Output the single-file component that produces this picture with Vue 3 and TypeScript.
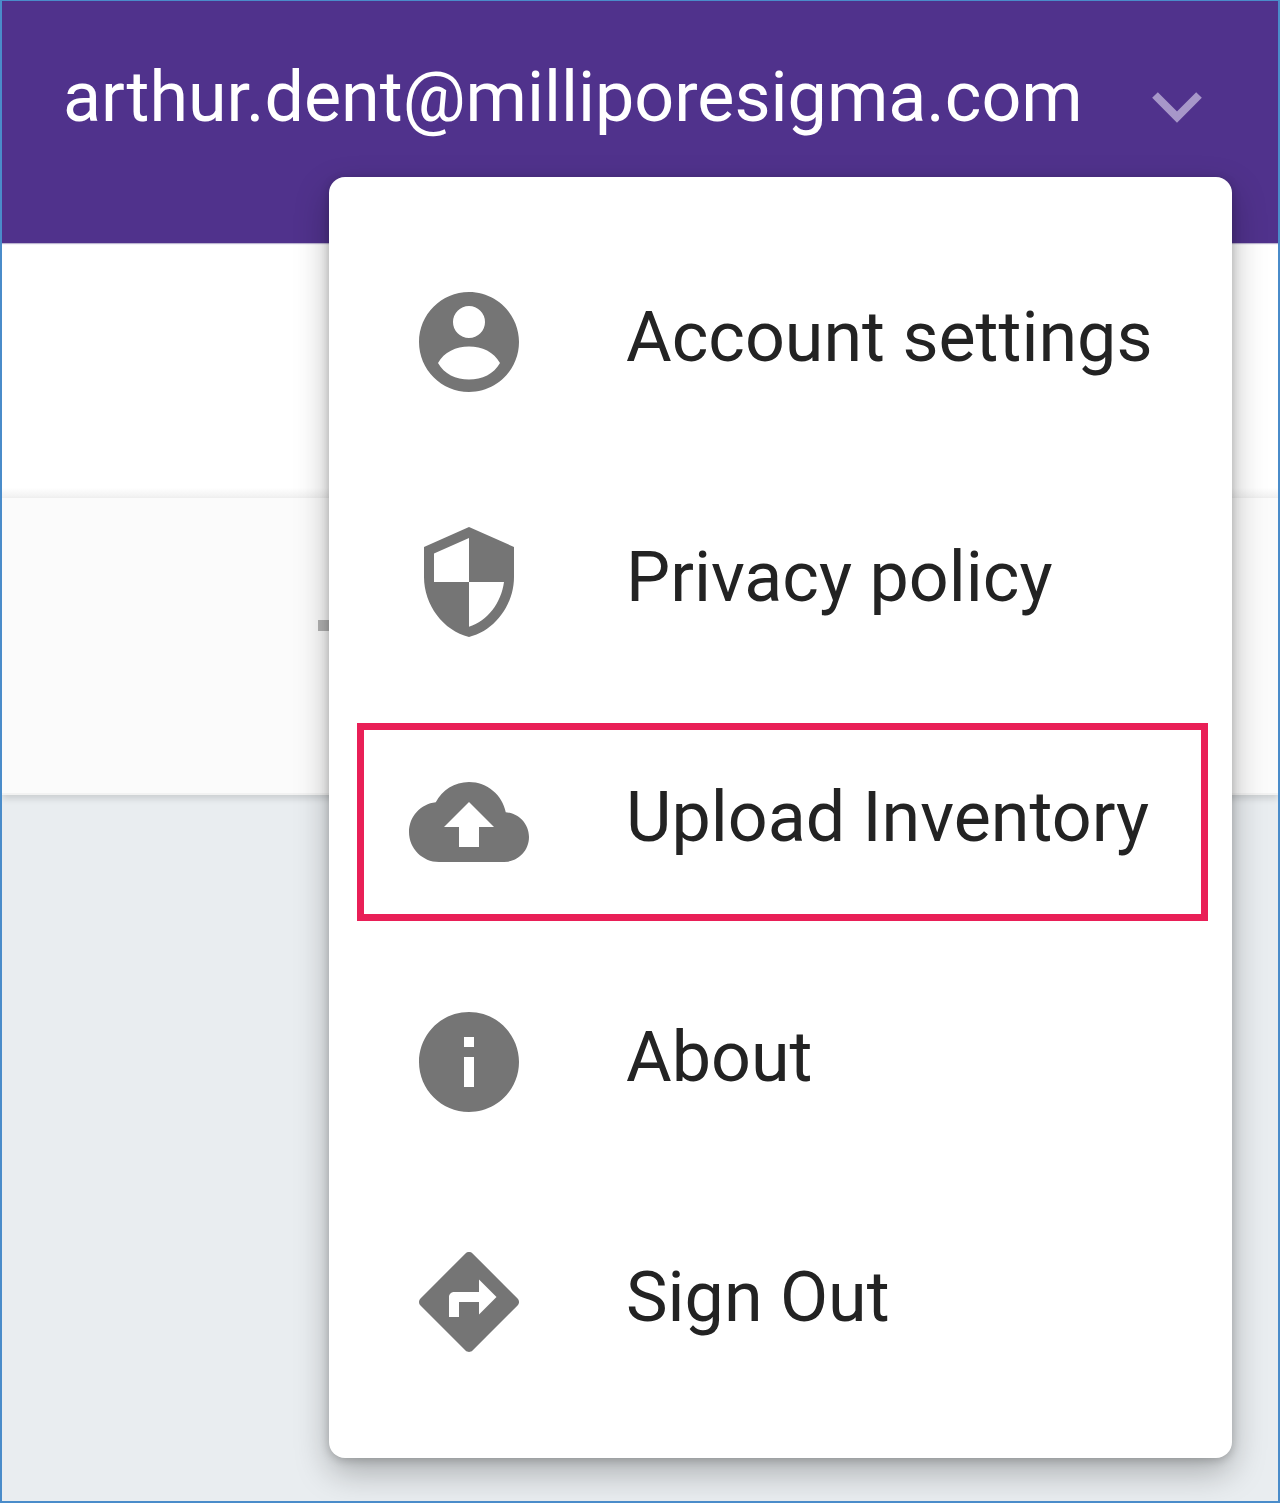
<script setup lang="ts">
interface MenuItem {
  label: string
  path: string
  rule?: string
  highlighted?: boolean
}

const items: MenuItem[] = [
  {
    label: 'Account settings',
    path: 'M12 2C6.48 2 2 6.48 2 12s4.48 10 10 10 10-4.48 10-10S17.52 2 12 2zm0 2.8a3.2 3.2 0 1 1 0 6.4 3.2 3.2 0 0 1 0-6.4zM5.8 16.2C7 14 9.4 12.9 12 12.9s5 1.1 6.2 3.3c-1.2 2.2-3.6 3.3-6.2 3.3s-5-1.1-6.2-3.3z',
    rule: 'evenodd'
  },
  {
    label: 'Privacy policy',
    path: 'M12 1L3 5v6c0 5.55 3.84 10.74 9 12 5.16-1.26 9-6.45 9-12V5l-9-4zm0 10.99h7c-.53 4.12-3.28 7.79-7 8.94V12H5V6.3l7-3.11v8.8z'
  },
  {
    label: 'Upload Inventory',
    path: 'M19.35 10.04C18.67 6.59 15.64 4 12 4 9.11 4 6.6 5.64 5.35 8.04 2.34 8.36 0 10.91 0 14c0 3.31 2.69 6 6 6h13c2.76 0 5-2.24 5-5 0-2.64-2.05-4.78-4.65-4.96zM14 13v4h-4v-4H7l5-5 5 5h-3z',
    highlighted: true
  },
  {
    label: 'About',
    path: 'M12 2C6.48 2 2 6.48 2 12s4.48 10 10 10 10-4.48 10-10S17.52 2 12 2zm1 15h-2v-6h2v6zm0-8h-2V7h2v2z'
  },
  {
    label: 'Sign Out',
    path: 'M21.71 11.29l-9-9c-.39-.39-1.02-.39-1.41 0l-9 9c-.39.39-.39 1.02 0 1.41l9 9c.39.39 1.02.39 1.41 0l9-9c.39-.38.39-1.01 0-1.41zM14 14.5V12h-4v3H8v-4c0-.55.45-1 1-1h5V7.5l3.5 3.5-3.5 3.5z'
  }
]
</script>

<template>
  <div class="page">
    <header class="topbar">
      <span class="email">arthur.dent@milliporesigma.com</span>
      <svg class="chevron" width="50" height="31" viewBox="0 0 50 31" aria-hidden="true">
        <path d="M3 3l22 22L47 3" fill="none" stroke="#a797c9" stroke-width="8" />
      </svg>
    </header>
    <section class="band-white"></section>
    <section class="band-grey"></section>
    <main class="canvas"></main>

    <span class="tick"></span>

    <nav class="menu">
      <div v-for="item in items" :key="item.label" class="row">
        <svg class="icon" width="120" height="120" viewBox="0 0 24 24" aria-hidden="true">
          <path :d="item.path" :fill-rule="item.rule === 'evenodd' ? 'evenodd' : 'nonzero'" fill="#757575" />
        </svg>
        <span class="label">{{ item.label }}</span>
        <span v-if="item.highlighted" class="callout"></span>
      </div>
    </nav>
  </div>
</template>

<style>
html,
body {
  margin: 0;
  padding: 0;
}
</style>

<style scoped>
.page {
  position: relative;
  box-sizing: border-box;
  width: 1280px;
  height: 1503px;
  display: flex;
  flex-direction: column;
  overflow: hidden;
  border-style: solid;
  border-color: #4a8cca;
  border-width: 1px 2px 2px 2px;
  font-family: Roboto, "Liberation Sans", sans-serif;
  background: #e9edf0;
}

.topbar {
  height: 242px;
  flex: none;
  display: flex;
  align-items: flex-start;
  padding: 0 76px 0 61px;
  box-sizing: border-box;
  background: #50328c;
  box-shadow: 0 1px 1px rgba(60, 40, 120, 0.35);
  position: relative;
  z-index: 1;
}

.email {
  margin-top: 54px;
  font-size: 70px;
  line-height: 84px;
  color: #ffffff;
  white-space: nowrap;
  filter: blur(0.4px);
}

.chevron {
  margin-left: auto;
  margin-top: 91px;
  flex: none;
}

.band-white {
  height: 255px;
  flex: none;
  box-sizing: border-box;
  background: linear-gradient(to bottom, #ffffff 96%, #f0f0f0 100%);
}

.band-grey {
  height: 295px;
  flex: none;
  background: #fbfbfb;
  border-bottom: 2px solid #f2f2f2;
  box-sizing: content-box;
  margin-bottom: -2px;
  box-shadow: 0 4px 6px rgba(0, 0, 0, 0.12);
  position: relative;
}

.canvas {
  flex: 1;
  background: #e9edf0;
}

.tick {
  position: absolute;
  left: 316px;
  top: 619px;
  width: 12px;
  height: 11px;
  background: #b4b4b4;
  filter: blur(0.5px);
}

.menu {
  position: absolute;
  left: 327px;
  top: 176px;
  width: 903px;
  height: 1281px;
  box-sizing: border-box;
  padding-top: 44px;
  background: #ffffff;
  border-radius: 16px;
  box-shadow: 0 14px 34px rgba(0, 0, 0, 0.28), 0 2px 10px rgba(0, 0, 0, 0.2);
  z-index: 2;
}

.row {
  position: relative;
  height: 240px;
  display: flex;
  align-items: center;
  padding-left: 79.5px;
}

.icon {
  flex: none;
  margin-top: 2px;
  filter: blur(0.5px);
}

.label {
  margin-left: 97.5px;
  margin-bottom: 8px;
  font-size: 70px;
  line-height: 84px;
  color: #232323;
  white-space: nowrap;
  filter: blur(0.4px);
}

.callout {
  position: absolute;
  left: 28px;
  right: 24px;
  top: 22px;
  bottom: 20px;
  border: 7px solid #e91f57;
}
</style>
